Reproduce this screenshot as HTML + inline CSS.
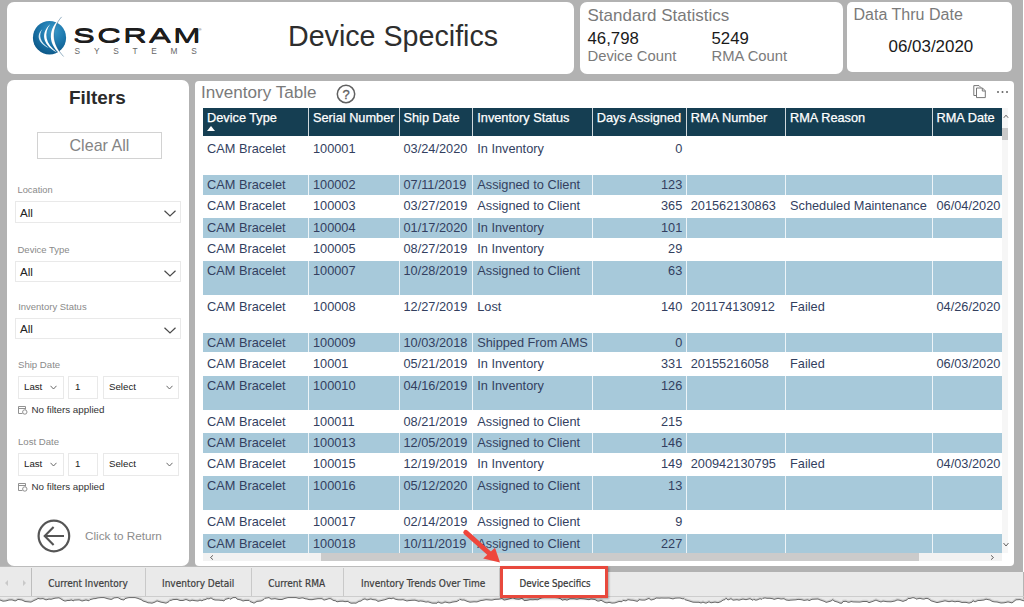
<!DOCTYPE html>
<html><head><meta charset="utf-8"><title>Device Specifics</title>
<style>
html,body{margin:0;padding:0;}
body{width:1024px;height:607px;overflow:hidden;background:#b2b2b2;font-family:"Liberation Sans",Arial,sans-serif;position:relative;}
.abs{position:absolute;}
.card{position:absolute;background:#fff;border-radius:8px;}
.t{position:absolute;white-space:nowrap;line-height:1;}
.hd{position:absolute;background:#153e52;top:108px;height:28px;}
.hd span{position:absolute;left:4.5px;top:2.5px;color:#fff;font-size:12.75px;white-space:nowrap;line-height:14px;-webkit-text-stroke:0.25px #fff;}
.row{position:absolute;left:202.5px;width:799px;}
.row.b{background:#a7c9da;}
.c{position:absolute;font-size:12.75px;color:#333f5f;white-space:nowrap;line-height:14px;}
.vs{position:absolute;width:1px;background:#fff;opacity:.8;top:108px;height:445px;}
.lbl{position:absolute;font-size:9.3px;color:#8a8a8a;white-space:nowrap;line-height:1;}
.dd{position:absolute;border:1px solid #e9e9e9;background:#fff;box-sizing:border-box;}
.dd .v{position:absolute;left:4px;top:50%;margin-top:1px;transform:translateY(-50%);font-size:11.6px;color:#222;line-height:1;}
.sm .v{font-size:9.7px;left:5px;margin-top:0}
.nf{position:absolute;font-size:9.8px;color:#333;white-space:nowrap;line-height:1;}
.tab{position:absolute;top:568px;height:29px;font-size:10px;color:#3c3c3c;line-height:31px;-webkit-text-stroke:0.2px #3c3c3c;white-space:nowrap;font-family:"DejaVu Sans Condensed","DejaVu Sans","Liberation Sans",sans-serif;}
</style></head><body>

<div class="card" style="left:7px;top:2px;width:567px;height:72px;border-radius:7px"></div>
<div class="card" style="left:579.5px;top:2px;width:263px;height:72px;border-radius:7px"></div>
<div class="card" style="left:847px;top:2px;width:165.3px;height:70px;border-radius:5px"></div>
<div class="card" style="left:7px;top:80px;width:182px;height:485.7px;border-radius:7px"></div>
<div class="card" style="left:195px;top:80.6px;width:819px;height:485.1px;border-radius:4px"></div>
<svg class="abs" style="left:30px;top:14px" width="50" height="46" viewBox="0 0 50 46">
<defs><radialGradient id="g" cx="0.6" cy="0.3" r="0.75"><stop offset="0" stop-color="#3c9bcb"/><stop offset="0.5" stop-color="#1d78ad"/><stop offset="1" stop-color="#0b5585"/></radialGradient></defs>
<ellipse cx="19.5" cy="23.7" rx="16.6" ry="16.8" fill="url(#g)"/>
<path d="M12.3 15.3 C7 20 6.4 28 18.8 34.1 C9.6 27.5 8.5 21 12.3 15.3 Z" fill="#dcecf6"/>
<path d="M20.2 10.3 C11.5 18 10.8 30 27.2 38.6 C15 29.5 13.7 19 20.2 10.3 Z" fill="#fff"/>
<path d="M31.6 2.9 C17.5 14 16.5 31 33.6 42.5 C21.8 30 20.8 15 31.6 2.9 Z" fill="#fff"/>
<path d="M31.6 2.9 C20.8 15 21.8 30 33.6 42.5" fill="none" stroke="#0c4b78" stroke-width="0.55" opacity=".8"/>
</svg>
<div class="t" id="scram" style="left:72.6px;top:26.2px;font-size:19.6px;font-weight:400;color:#1d1d1d;letter-spacing:1.4px;transform-origin:0 0;transform:scaleX(1.67);text-shadow:0 0.5px 0 #1d1d1d,0 1px 0 #1d1d1d;-webkit-text-stroke:0.08px #1d1d1d;">SCRAM</div>
<div class="t" style="left:198.5px;top:27.5px;font-size:4px;color:#444;">®</div>
<div class="t" id="systems" style="left:74.6px;top:47.4px;font-size:8.3px;color:#666;letter-spacing:13.75px;">SYSTEMS</div>
<div class="t" style="left:288px;top:22px;font-size:28.65px;color:#2e2e2e;">Device Specifics</div>
<div class="t" style="left:587.5px;top:6.5px;font-size:17px;color:#7a7a7a;">Standard Statistics</div>
<div class="t" style="left:587.5px;top:30.5px;font-size:16.8px;color:#1a1a1a;">46,798</div>
<div class="t" style="left:587.5px;top:49px;font-size:14.8px;color:#7a7a7a;">Device Count</div>
<div class="t" style="left:711.5px;top:30.5px;font-size:16.8px;color:#1a1a1a;">5249</div>
<div class="t" style="left:711.5px;top:49px;font-size:14.8px;color:#7a7a7a;">RMA Count</div>
<div class="t" style="left:853.5px;top:5.5px;font-size:16.05px;color:#7a7a7a;">Data Thru Date</div>
<div class="t" style="left:888.5px;top:39.3px;font-size:16.95px;color:#1a1a1a;">06/03/2020</div>
<div class="t" style="left:69px;top:88.5px;font-size:18.9px;font-weight:bold;color:#2a2a2a;">Filters</div>
<div class="abs" style="left:37px;top:132px;width:125px;height:26.5px;box-sizing:border-box;border:1.5px solid #d2d2d2;"></div>
<div class="t" style="left:69.5px;top:136.5px;font-size:16.1px;color:#848484;">Clear All</div>
<div class="lbl" style="left:17.5px;top:185.5px;font-size:9.3px">Location</div>
<div class="dd" style="left:15px;top:201.0px;width:165.5px;height:21.5px"><span class="v">All</span><svg class="abs" style="right:3.5px;top:50%;margin-top:-1.6px" width="12" height="7" viewBox="0 0 12 7"><path d="M0.5 0.8 L6 6 L11.5 0.8" fill="none" stroke="#4a4a4a" stroke-width="1.2"/></svg></div>
<div class="lbl" style="left:17.5px;top:245.3px;font-size:9.5px">Device Type</div>
<div class="dd" style="left:15px;top:260.5px;width:165.5px;height:21.5px"><span class="v">All</span><svg class="abs" style="right:3.5px;top:50%;margin-top:-1.6px" width="12" height="7" viewBox="0 0 12 7"><path d="M0.5 0.8 L6 6 L11.5 0.8" fill="none" stroke="#4a4a4a" stroke-width="1.2"/></svg></div>
<div class="lbl" style="left:18.2px;top:302.3px;font-size:9.47px">Inventory Status</div>
<div class="dd" style="left:15px;top:317.5px;width:165.5px;height:21.5px"><span class="v">All</span><svg class="abs" style="right:3.5px;top:50%;margin-top:-1.6px" width="12" height="7" viewBox="0 0 12 7"><path d="M0.5 0.8 L6 6 L11.5 0.8" fill="none" stroke="#4a4a4a" stroke-width="1.2"/></svg></div>
<div class="lbl" style="left:18px;top:360px;font-size:9.6px">Ship Date</div>
<div class="dd sm" style="left:18px;top:376px;width:45.5px;height:22.5px"><span class="v">Last</span><svg class="abs" style="right:5.5px;top:50%;margin-top:-2px" width="7" height="5" viewBox="0 0 7 5"><path d="M0.5 0.8 L3.5 4 L6.5 0.8" fill="none" stroke="#606060" stroke-width="0.95"/></svg></div>
<div class="dd sm" style="left:68px;top:376px;width:29.5px;height:22.5px"><span class="v" style="left:6px">1</span></div>
<div class="dd sm" style="left:103px;top:376px;width:76px;height:22.5px"><span class="v">Select</span><svg class="abs" style="right:5.5px;top:50%;margin-top:-2px" width="7" height="5" viewBox="0 0 7 5"><path d="M0.5 0.8 L3.5 4 L6.5 0.8" fill="none" stroke="#606060" stroke-width="0.95"/></svg></div>
<svg class="abs" style="left:18px;top:405.3px" width="10" height="10" viewBox="0 0 10 10"><path d="M0.5 1.5 H7.5 V4.5 M0.5 1.5 V8.5 H4.5 M0.5 3.5 H7.5" fill="none" stroke="#8c8c8c" stroke-width="0.95"/><circle cx="6.8" cy="7" r="2.2" fill="#fff" stroke="#8c8c8c" stroke-width="0.95"/></svg>
<div class="nf" style="left:31.5px;top:405.3px">No filters applied</div>
<div class="lbl" style="left:18px;top:437px;font-size:9.6px">Lost Date</div>
<div class="dd sm" style="left:18px;top:453px;width:45.5px;height:22.5px"><span class="v">Last</span><svg class="abs" style="right:5.5px;top:50%;margin-top:-2px" width="7" height="5" viewBox="0 0 7 5"><path d="M0.5 0.8 L3.5 4 L6.5 0.8" fill="none" stroke="#606060" stroke-width="0.95"/></svg></div>
<div class="dd sm" style="left:68px;top:453px;width:29.5px;height:22.5px"><span class="v" style="left:6px">1</span></div>
<div class="dd sm" style="left:103px;top:453px;width:76px;height:22.5px"><span class="v">Select</span><svg class="abs" style="right:5.5px;top:50%;margin-top:-2px" width="7" height="5" viewBox="0 0 7 5"><path d="M0.5 0.8 L3.5 4 L6.5 0.8" fill="none" stroke="#606060" stroke-width="0.95"/></svg></div>
<svg class="abs" style="left:18px;top:482.3px" width="10" height="10" viewBox="0 0 10 10"><path d="M0.5 1.5 H7.5 V4.5 M0.5 1.5 V8.5 H4.5 M0.5 3.5 H7.5" fill="none" stroke="#8c8c8c" stroke-width="0.95"/><circle cx="6.8" cy="7" r="2.2" fill="#fff" stroke="#8c8c8c" stroke-width="0.95"/></svg>
<div class="nf" style="left:31.5px;top:482.3px">No filters applied</div>
<svg class="abs" style="left:36px;top:518.3px" width="36" height="36" viewBox="0 0 36 36"><circle cx="17.9" cy="18" r="15.3" fill="none" stroke="#555" stroke-width="2.2"/><path d="M28 18 H9 M17.6 9.1 L8.7 18 L17.6 26.9" fill="none" stroke="#555" stroke-width="2.1"/></svg>
<div class="t" style="left:85px;top:530.3px;font-size:11.72px;color:#8c8c8c;">Click to Return</div>
<div class="t" style="left:201px;top:83.5px;font-size:17.1px;color:#7a7a7a;">Inventory Table</div>
<svg class="abs" style="left:336px;top:84px" width="20" height="20" viewBox="0 0 20 20"><circle cx="10" cy="10" r="8.7" fill="none" stroke="#606060" stroke-width="1.5"/><text x="10" y="14.6" font-size="13" text-anchor="middle" fill="#606060" stroke="#606060" stroke-width="0.3" font-family="Liberation Sans, sans-serif">?</text></svg>
<svg class="abs" style="left:973px;top:85px" width="14" height="14" viewBox="0 0 14 14"><path d="M3.5 10.5 H0.8 V0.6 H6 L8 2.6" fill="none" stroke="#777" stroke-width="1"/><path d="M3.5 3 H9.5 L12.3 5.8 V12.6 H3.5 Z M9.3 3 V6 H12.3" fill="#fff" stroke="#777" stroke-width="1"/></svg>
<div class="abs" style="left:997px;top:91px;width:2px;height:2px;background:#666;border-radius:1px;box-shadow:4.5px 0 0 #666,9px 0 0 #666"></div>
<div class="hd" style="left:202.5px;width:106.0px"><span>Device Type</span></div>
<div class="hd" style="left:308.5px;width:90.5px"><span>Serial Number</span></div>
<div class="hd" style="left:399px;width:73.75px"><span>Ship Date</span></div>
<div class="hd" style="left:472.75px;width:119.5px"><span>Inventory Status</span></div>
<div class="hd" style="left:592.25px;width:94.0px"><span>Days Assigned</span></div>
<div class="hd" style="left:686.25px;width:99.25px"><span>RMA Number</span></div>
<div class="hd" style="left:785.5px;width:146.5px"><span>RMA Reason</span></div>
<div class="hd" style="left:932px;width:69.5px"><span>RMA Date</span></div>
<div class="abs" style="left:207px;top:126px;width:0;height:0;border-left:4.4px solid transparent;border-right:4.4px solid transparent;border-bottom:5px solid #fff"></div>
<div class="row" style="top:137px;height:37px"></div>
<div class="c" style="left:207.0px;top:142.1px">CAM Bracelet</div>
<div class="c" style="left:313.0px;top:142.1px">100001</div>
<div class="c" style="left:403.5px;top:142.1px">03/24/2020</div>
<div class="c" style="left:477.25px;top:142.1px">In Inventory</div>
<div class="c" style="right:341.75px;top:142.1px">0</div>
<div class="row b" style="top:174.6px;height:20.0px"></div>
<div class="c" style="left:207.0px;top:178.29999999999998px">CAM Bracelet</div>
<div class="c" style="left:313.0px;top:178.29999999999998px">100002</div>
<div class="c" style="left:403.5px;top:178.29999999999998px">07/11/2019</div>
<div class="c" style="left:477.25px;top:178.29999999999998px">Assigned to Client</div>
<div class="c" style="right:341.75px;top:178.29999999999998px">123</div>
<div class="row" style="top:195px;height:22px"></div>
<div class="c" style="left:207.0px;top:199.1px">CAM Bracelet</div>
<div class="c" style="left:313.0px;top:199.1px">100003</div>
<div class="c" style="left:403.5px;top:199.1px">03/27/2019</div>
<div class="c" style="left:477.25px;top:199.1px">Assigned to Client</div>
<div class="c" style="right:341.75px;top:199.1px">365</div>
<div class="c" style="left:690.75px;top:199.1px">201562130863</div>
<div class="c" style="left:790.0px;top:199.1px">Scheduled Maintenance</div>
<div class="c" style="left:936.5px;top:199.1px">06/04/2020</div>
<div class="row b" style="top:218px;height:20px"></div>
<div class="c" style="left:207.0px;top:221.29999999999998px">CAM Bracelet</div>
<div class="c" style="left:313.0px;top:221.29999999999998px">100004</div>
<div class="c" style="left:403.5px;top:221.29999999999998px">01/17/2020</div>
<div class="c" style="left:477.25px;top:221.29999999999998px">In Inventory</div>
<div class="c" style="right:341.75px;top:221.29999999999998px">101</div>
<div class="row" style="top:238px;height:22px"></div>
<div class="c" style="left:207.0px;top:242.1px">CAM Bracelet</div>
<div class="c" style="left:313.0px;top:242.1px">100005</div>
<div class="c" style="left:403.5px;top:242.1px">08/27/2019</div>
<div class="c" style="left:477.25px;top:242.1px">In Inventory</div>
<div class="c" style="right:341.75px;top:242.1px">29</div>
<div class="row b" style="top:261.3px;height:33.39999999999998px"></div>
<div class="c" style="left:207.0px;top:264.3px">CAM Bracelet</div>
<div class="c" style="left:313.0px;top:264.3px">100007</div>
<div class="c" style="left:403.5px;top:264.3px">10/28/2019</div>
<div class="c" style="left:477.25px;top:264.3px">Assigned to Client</div>
<div class="c" style="right:341.75px;top:264.3px">63</div>
<div class="row" style="top:295px;height:37px"></div>
<div class="c" style="left:207.0px;top:300.1px">CAM Bracelet</div>
<div class="c" style="left:313.0px;top:300.1px">100008</div>
<div class="c" style="left:403.5px;top:300.1px">12/27/2019</div>
<div class="c" style="left:477.25px;top:300.1px">Lost</div>
<div class="c" style="right:341.75px;top:300.1px">140</div>
<div class="c" style="left:690.75px;top:300.1px">201174130912</div>
<div class="c" style="left:790.0px;top:300.1px">Failed</div>
<div class="c" style="left:936.5px;top:300.1px">04/26/2020</div>
<div class="row b" style="top:332.7px;height:19.69999999999999px"></div>
<div class="c" style="left:207.0px;top:336.3px">CAM Bracelet</div>
<div class="c" style="left:313.0px;top:336.3px">100009</div>
<div class="c" style="left:403.5px;top:336.3px">10/03/2018</div>
<div class="c" style="left:477.25px;top:336.3px">Shipped From AMS</div>
<div class="c" style="right:341.75px;top:336.3px">0</div>
<div class="row" style="top:353px;height:22px"></div>
<div class="c" style="left:207.0px;top:357.1px">CAM Bracelet</div>
<div class="c" style="left:313.0px;top:357.1px">10001</div>
<div class="c" style="left:403.5px;top:357.1px">05/21/2019</div>
<div class="c" style="left:477.25px;top:357.1px">In Inventory</div>
<div class="c" style="right:341.75px;top:357.1px">331</div>
<div class="c" style="left:690.75px;top:357.1px">20155216058</div>
<div class="c" style="left:790.0px;top:357.1px">Failed</div>
<div class="c" style="left:936.5px;top:357.1px">06/03/2020</div>
<div class="row b" style="top:376.2px;height:33.80000000000001px"></div>
<div class="c" style="left:207.0px;top:379.3px">CAM Bracelet</div>
<div class="c" style="left:313.0px;top:379.3px">100010</div>
<div class="c" style="left:403.5px;top:379.3px">04/16/2019</div>
<div class="c" style="left:477.25px;top:379.3px">In Inventory</div>
<div class="c" style="right:341.75px;top:379.3px">126</div>
<div class="row" style="top:410px;height:22px"></div>
<div class="c" style="left:207.0px;top:415.1px">CAM Bracelet</div>
<div class="c" style="left:313.0px;top:415.1px">100011</div>
<div class="c" style="left:403.5px;top:415.1px">08/21/2019</div>
<div class="c" style="left:477.25px;top:415.1px">Assigned to Client</div>
<div class="c" style="right:341.75px;top:415.1px">215</div>
<div class="row b" style="top:433px;height:19.80000000000001px"></div>
<div class="c" style="left:207.0px;top:436.3px">CAM Bracelet</div>
<div class="c" style="left:313.0px;top:436.3px">100013</div>
<div class="c" style="left:403.5px;top:436.3px">12/05/2019</div>
<div class="c" style="left:477.25px;top:436.3px">Assigned to Client</div>
<div class="c" style="right:341.75px;top:436.3px">146</div>
<div class="row" style="top:453px;height:22px"></div>
<div class="c" style="left:207.0px;top:457.1px">CAM Bracelet</div>
<div class="c" style="left:313.0px;top:457.1px">100015</div>
<div class="c" style="left:403.5px;top:457.1px">12/19/2019</div>
<div class="c" style="left:477.25px;top:457.1px">In Inventory</div>
<div class="c" style="right:341.75px;top:457.1px">149</div>
<div class="c" style="left:690.75px;top:457.1px">200942130795</div>
<div class="c" style="left:790.0px;top:457.1px">Failed</div>
<div class="c" style="left:936.5px;top:457.1px">04/03/2020</div>
<div class="row b" style="top:476.2px;height:33.80000000000001px"></div>
<div class="c" style="left:207.0px;top:479.3px">CAM Bracelet</div>
<div class="c" style="left:313.0px;top:479.3px">100016</div>
<div class="c" style="left:403.5px;top:479.3px">05/12/2020</div>
<div class="c" style="left:477.25px;top:479.3px">Assigned to Client</div>
<div class="c" style="right:341.75px;top:479.3px">13</div>
<div class="row" style="top:510px;height:22px"></div>
<div class="c" style="left:207.0px;top:515.1px">CAM Bracelet</div>
<div class="c" style="left:313.0px;top:515.1px">100017</div>
<div class="c" style="left:403.5px;top:515.1px">02/14/2019</div>
<div class="c" style="left:477.25px;top:515.1px">Assigned to Client</div>
<div class="c" style="right:341.75px;top:515.1px">9</div>
<div class="row b" style="top:533.6px;height:19.600000000000023px"></div>
<div class="c" style="left:207.0px;top:537.3000000000001px">CAM Bracelet</div>
<div class="c" style="left:313.0px;top:537.3000000000001px">100018</div>
<div class="c" style="left:403.5px;top:537.3000000000001px">10/11/2019</div>
<div class="c" style="left:477.25px;top:537.3000000000001px">Assigned to Client</div>
<div class="c" style="right:341.75px;top:537.3000000000001px">227</div>
<div class="vs" style="left:308px"></div>
<div class="vs" style="left:399px"></div>
<div class="vs" style="left:472px"></div>
<div class="vs" style="left:592px"></div>
<div class="vs" style="left:686px"></div>
<div class="vs" style="left:785px"></div>
<div class="vs" style="left:932px"></div>
<div class="abs" style="left:1002px;top:108px;width:6px;height:445px;background:#f6f6f6"></div>
<div class="abs" style="left:1002px;top:128px;width:6px;height:12px;background:#c9c9c9"></div>
<div class="abs" style="left:202.5px;top:553.2px;width:799px;height:7.6px;background:#f2f2f2"></div>
<div class="abs" style="left:321.3px;top:553.2px;width:598px;height:7.6px;background:#cbcbcb"></div>
<svg class="abs" style="left:1002.7px;top:113.5px" width="6" height="5" viewBox="0 0 6 5"><path d="M0.8 3.8 L3 1.2 L5.2 3.8" fill="none" stroke="#555" stroke-width="0.9"/></svg>
<svg class="abs" style="left:1002.5px;top:541.5px" width="6" height="5" viewBox="0 0 6 5"><path d="M0.5 1 L3 4 L5.5 1" fill="none" stroke="#555" stroke-width="0.9"/></svg>
<svg class="abs" style="left:208.5px;top:554.5px" width="6" height="5" viewBox="0 0 6 5"><path d="M4 0.3 L1.5 2.5 L4 4.7" fill="none" stroke="#555" stroke-width="0.9"/></svg>
<svg class="abs" style="left:988.5px;top:554.5px" width="6" height="5" viewBox="0 0 6 5"><path d="M2 0.3 L4.5 2.5 L2 4.7" fill="none" stroke="#555" stroke-width="0.9"/></svg>
<div class="abs" style="left:0;top:566.3px;width:1024px;height:41px;background:#eaeaea"></div>
<div class="abs" style="left:0;top:566.3px;width:1024px;height:1px;background:#bcbcbc"></div>
<div class="abs" style="left:608px;top:566.3px;width:416px;height:6px;background:#b2b2b2"></div>
<div class="abs" style="left:31px;top:567.5px;width:1px;height:29px;background:#bdbdbd"></div>
<div class="abs" style="left:144.5px;top:567.5px;width:1px;height:29px;background:#c9c9c9"></div>
<div class="tab" style="left:48.2px">Current Inventory</div>
<div class="abs" style="left:250.5px;top:567.5px;width:1px;height:29px;background:#c9c9c9"></div>
<div class="tab" style="left:162px">Inventory Detail</div>
<div class="abs" style="left:342.5px;top:567.5px;width:1px;height:29px;background:#c9c9c9"></div>
<div class="tab" style="left:268.3px">Current RMA</div>
<div class="abs" style="left:499px;top:567.5px;width:1px;height:29px;background:#c9c9c9"></div>
<div class="tab" style="left:361px">Inventory Trends Over Time</div>
<svg class="abs" style="left:3.5px;top:578.5px" width="24" height="8" viewBox="0 0 24 8"><path d="M4 1 L1 4 L4 7 Z M19 1 L22 4 L19 7 Z" fill="#c9c9c9"/></svg>
<svg class="abs" style="left:455px;top:525px" width="50" height="50" viewBox="0 0 50 50"><path d="M10.8 7.4 L35 29" stroke="#ee463c" stroke-width="5" stroke-linecap="round" fill="none"/><path d="M45 37.6 L28.2 33.6 L40 22.7 Z" fill="#ee463c"/></svg>
<div class="abs" style="left:1022.5px;top:0;width:1.5px;height:572.3px;background:#fff"></div>
<div class="abs" style="left:1022.5px;top:572.3px;width:1.5px;height:30px;background:#b4b4b4"></div>
<div class="abs" style="left:0;top:596px;width:1024px;height:1px;background:#cdcdcd"></div>
<svg class="abs" style="left:0;top:0" width="1024" height="607" viewBox="0 0 1024 607"><path d="M0 599.0 L3 600.2 L6 599.9 L9 599.0 L12 598.9 L15 599.9 L16 599.7 L18 598.4 L22 599.0 L25 600.5 L28 600.8 L31 601.1 L34 599.5 L37 598.2 L38 597.4 L40 597.9 L43 597.6 L46 598.9 L49 598.1 L51 598.3 L55 597.2 L59 596.8 L62 598.6 L63 599.3 L65 600.1 L68 599.4 L69 599.6 L70 599.3 L72 599.0 L73 600.1 L74 599.2 L75 599.1 L79 598.9 L80 599.1 L82 600.0 L84 599.5 L86 599.0 L89 599.8 L90 598.7 L94 597.6 L95 597.7 L98 596.9 L101 596.6 L104 596.6 L108 597.8 L111 598.4 L112 598.2 L114 596.9 L117 596.6 L118 596.6 L121 598.4 L124 599.0 L125 597.7 L127 597.0 L129 596.6 L132 596.6 L134 596.6 L135 596.6 L138 597.4 L139 597.9 L141 598.5 L143 600.0 L146 600.9 L148 601.8 L150 601.9 L152 602.2 L155 601.1 L157 599.9 L161 601.2 L163 601.5 L166 602.2 L169 600.6 L170 599.3 L171 599.4 L173 598.6 L177 598.4 L180 599.5 L183 599.5 L186 598.5 L190 600.0 L192 599.2 L195 599.7 L198 600.0 L200 599.1 L202 599.9 L203 599.1 L206 598.4 L207 597.6 L209 597.9 L211 596.9 L213 598.4 L215 599.0 L219 599.1 L221 599.4 L222 599.3 L224 600.0 L225 598.5 L229 597.3 L230 598.3 L232 597.3 L233 596.6 L236 596.6 L237 598.1 L241 599.0 L243 600.0 L245 599.5 L249 599.4 L250 600.5 L253 601.7 L254 602.2 L257 600.4 L261 600.0 L264 598.4 L265 597.3 L269 596.6 L271 598.1 L275 597.7 L279 598.5 L282 598.5 L285 597.4 L288 596.6 L291 596.6 L292 596.6 L296 596.6 L299 597.4 L302 596.9 L303 596.9 L305 597.7 L307 598.0 L309 598.6 L312 598.7 L314 598.3 L318 597.7 L322 597.7 L324 599.1 L327 598.3 L329 597.6 L331 597.8 L332 598.6 L334 599.7 L335 599.5 L337 600.8 L340 600.3 L343 600.2 L345 600.7 L348 600.4 L349 601.3 L351 602.2 L352 602.2 L354 602.1 L356 602.2 L359 600.4 L361 600.0 L363 598.5 L365 597.9 L367 599.0 L371 597.9 L372 598.5 L376 599.0 L378 600.4 L382 599.4 L385 598.7 L389 597.3 L392 597.7 L393 596.9 L395 598.1 L398 598.8 L401 598.9 L403 598.7 L407 600.0 L408 599.7 L412 599.3 L415 599.2 L419 600.4 L420 599.9 L423 600.3 L426 601.1 L428 600.8 L432 602.1 L433 602.2 L437 602.2 L438 601.0 L441 602.2 L443 602.0 L445 601.0 L449 601.9 L451 601.6 L452 601.2 L455 600.7 L457 600.5 L458 599.6 L459 599.4 L460 598.4 L462 599.1 L464 599.0 L467 600.3 L470 601.2 L474 600.8 L477 600.9 L481 599.5 L483 599.3 L486 598.7 L490 599.0 L492 599.1 L495 598.4 L499 598.2 L502 597.5 L504 599.1 L507 598.5 L510 597.7 L513 596.8 L514 597.4 L515 597.8 L516 598.0 L519 598.3 L522 597.3 L523 598.2 L524 599.6 L527 599.4 L530 598.7 L533 598.8 L535 598.6 L538 598.8 L539 598.0 L542 596.8 L544 596.6 L545 596.6 L547 596.6 L551 596.6 L555 596.6 L558 596.9 L561 597.9 L562 599.2 L565 598.5 L567 599.2 L570 597.8 L574 597.8 L577 598.3 L580 597.6 L584 597.9 L586 598.2 L589 598.7 L591 598.0 L595 598.5 L597 599.9 L599 600.1 L601 599.2 L603 600.4 L605 601.5 L607 601.9 L609 601.3 L612 602.1 L615 601.9 L619 600.5 L622 600.7 L623 599.4 L626 599.9 L628 598.7 L631 599.2 L633 599.3 L637 600.3 L638 600.1 L639 598.7 L642 599.1 L645 599.1 L647 598.2 L649 597.4 L651 599.1 L655 597.9 L656 597.0 L660 597.2 L661 597.0 L664 597.1 L666 597.1 L669 597.0 L673 597.9 L675 597.2 L678 597.0 L680 597.0 L682 597.6 L683 597.9 L684 597.6 L685 598.7 L689 599.9 L693 601.2 L696 601.3 L699 601.3 L701 602.0 L703 601.1 L704 601.6 L706 602.2 L709 600.8 L711 601.8 L715 601.1 L718 601.7 L721 600.6 L723 599.1 L725 598.6 L726 597.2 L728 599.0 L731 597.7 L733 599.2 L737 598.7 L739 599.2 L742 598.3 L743 598.1 L746 598.7 L750 597.7 L753 599.3 L754 598.2 L755 599.1 L757 599.0 L760 597.7 L762 598.3 L763 597.3 L765 596.9 L767 597.3 L770 597.3 L773 597.8 L774 598.4 L778 597.3 L781 598.0 L782 597.9 L784 597.7 L786 599.0 L789 599.4 L790 599.2 L793 599.0 L796 598.8 L798 598.4 L800 598.5 L802 598.8 L804 599.4 L808 598.8 L809 599.7 L812 598.3 L814 598.2 L818 598.0 L820 598.9 L821 599.2 L825 600.6 L826 601.4 L828 600.9 L831 600.0 L833 598.6 L834 600.0 L838 601.2 L840 602.2 L842 602.2 L843 600.5 L846 600.3 L848 601.3 L850 601.1 L851 600.5 L853 600.9 L856 601.0 L860 601.1 L863 600.5 L867 600.5 L869 601.7 L873 600.3 L876 599.1 L878 600.0 L881 601.0 L883 600.1 L887 600.7 L891 600.8 L895 600.0 L897 599.0 L899 599.1 L903 600.4 L907 598.9 L908 597.5 L910 597.5 L913 596.6 L915 597.1 L916 598.1 L920 597.3 L922 597.9 L924 598.1 L926 597.4 L928 597.6 L930 598.9 L931 599.8 L934 600.7 L937 601.6 L939 601.2 L943 600.3 L945 599.8 L949 600.7 L952 600.1 L955 600.8 L957 600.4 L959 600.5 L962 601.5 L963 601.4 L966 601.4 L969 602.1 L972 601.2 L973 599.7 L975 600.9 L978 599.5 L980 599.5 L984 599.0 L986 598.2 L990 599.0 L992 600.3 L994 600.8 L997 601.0 L1001 602.0 L1004 601.8 L1006 601.4 L1008 600.9 L1012 601.9 L1014 600.4 L1016 598.8 L1020 598.6 L1023 599.6 L1024 599.8" fill="none" stroke="#cfcfcf" stroke-width="1.4"/><path d="M0 607 L0 600.0 L3 601.2 L6 600.9 L9 600.0 L12 599.9 L15 600.9 L16 600.7 L18 599.4 L22 600.0 L25 601.5 L28 601.8 L31 602.1 L34 600.5 L37 599.2 L38 598.4 L40 598.9 L43 598.6 L46 599.9 L49 599.1 L51 599.3 L55 598.2 L59 597.8 L62 599.6 L63 600.3 L65 601.1 L68 600.4 L69 600.6 L70 600.3 L72 600.0 L73 601.1 L74 600.2 L75 600.1 L79 599.9 L80 600.1 L82 601.0 L84 600.5 L86 600.0 L89 600.8 L90 599.7 L94 598.6 L95 598.7 L98 597.9 L101 597.6 L104 597.6 L108 598.8 L111 599.4 L112 599.2 L114 597.9 L117 597.6 L118 597.6 L121 599.4 L124 600.0 L125 598.7 L127 598.0 L129 597.6 L132 597.6 L134 597.6 L135 597.6 L138 598.4 L139 598.9 L141 599.5 L143 601.0 L146 601.9 L148 602.8 L150 602.9 L152 603.2 L155 602.1 L157 600.9 L161 602.2 L163 602.5 L166 603.2 L169 601.6 L170 600.3 L171 600.4 L173 599.6 L177 599.4 L180 600.5 L183 600.5 L186 599.5 L190 601.0 L192 600.2 L195 600.7 L198 601.0 L200 600.1 L202 600.9 L203 600.1 L206 599.4 L207 598.6 L209 598.9 L211 597.9 L213 599.4 L215 600.0 L219 600.1 L221 600.4 L222 600.3 L224 601.0 L225 599.5 L229 598.3 L230 599.3 L232 598.3 L233 597.6 L236 597.6 L237 599.1 L241 600.0 L243 601.0 L245 600.5 L249 600.4 L250 601.5 L253 602.7 L254 603.2 L257 601.4 L261 601.0 L264 599.4 L265 598.3 L269 597.6 L271 599.1 L275 598.7 L279 599.5 L282 599.5 L285 598.4 L288 597.6 L291 597.6 L292 597.6 L296 597.6 L299 598.4 L302 597.9 L303 597.9 L305 598.7 L307 599.0 L309 599.6 L312 599.7 L314 599.3 L318 598.7 L322 598.7 L324 600.1 L327 599.3 L329 598.6 L331 598.8 L332 599.6 L334 600.7 L335 600.5 L337 601.8 L340 601.3 L343 601.2 L345 601.7 L348 601.4 L349 602.3 L351 603.2 L352 603.2 L354 603.1 L356 603.2 L359 601.4 L361 601.0 L363 599.5 L365 598.9 L367 600.0 L371 598.9 L372 599.5 L376 600.0 L378 601.4 L382 600.4 L385 599.7 L389 598.3 L392 598.7 L393 597.9 L395 599.1 L398 599.8 L401 599.9 L403 599.7 L407 601.0 L408 600.7 L412 600.3 L415 600.2 L419 601.4 L420 600.9 L423 601.3 L426 602.1 L428 601.8 L432 603.1 L433 603.2 L437 603.2 L438 602.0 L441 603.2 L443 603.0 L445 602.0 L449 602.9 L451 602.6 L452 602.2 L455 601.7 L457 601.5 L458 600.6 L459 600.4 L460 599.4 L462 600.1 L464 600.0 L467 601.3 L470 602.2 L474 601.8 L477 601.9 L481 600.5 L483 600.3 L486 599.7 L490 600.0 L492 600.1 L495 599.4 L499 599.2 L502 598.5 L504 600.1 L507 599.5 L510 598.7 L513 597.8 L514 598.4 L515 598.8 L516 599.0 L519 599.3 L522 598.3 L523 599.2 L524 600.6 L527 600.4 L530 599.7 L533 599.8 L535 599.6 L538 599.8 L539 599.0 L542 597.8 L544 597.6 L545 597.6 L547 597.6 L551 597.6 L555 597.6 L558 597.9 L561 598.9 L562 600.2 L565 599.5 L567 600.2 L570 598.8 L574 598.8 L577 599.3 L580 598.6 L584 598.9 L586 599.2 L589 599.7 L591 599.0 L595 599.5 L597 600.9 L599 601.1 L601 600.2 L603 601.4 L605 602.5 L607 602.9 L609 602.3 L612 603.1 L615 602.9 L619 601.5 L622 601.7 L623 600.4 L626 600.9 L628 599.7 L631 600.2 L633 600.3 L637 601.3 L638 601.1 L639 599.7 L642 600.1 L645 600.1 L647 599.2 L649 598.4 L651 600.1 L655 598.9 L656 598.0 L660 598.2 L661 598.0 L664 598.1 L666 598.1 L669 598.0 L673 598.9 L675 598.2 L678 598.0 L680 598.0 L682 598.6 L683 598.9 L684 598.6 L685 599.7 L689 600.9 L693 602.2 L696 602.3 L699 602.3 L701 603.0 L703 602.1 L704 602.6 L706 603.2 L709 601.8 L711 602.8 L715 602.1 L718 602.7 L721 601.6 L723 600.1 L725 599.6 L726 598.2 L728 600.0 L731 598.7 L733 600.2 L737 599.7 L739 600.2 L742 599.3 L743 599.1 L746 599.7 L750 598.7 L753 600.3 L754 599.2 L755 600.1 L757 600.0 L760 598.7 L762 599.3 L763 598.3 L765 597.9 L767 598.3 L770 598.3 L773 598.8 L774 599.4 L778 598.3 L781 599.0 L782 598.9 L784 598.7 L786 600.0 L789 600.4 L790 600.2 L793 600.0 L796 599.8 L798 599.4 L800 599.5 L802 599.8 L804 600.4 L808 599.8 L809 600.7 L812 599.3 L814 599.2 L818 599.0 L820 599.9 L821 600.2 L825 601.6 L826 602.4 L828 601.9 L831 601.0 L833 599.6 L834 601.0 L838 602.2 L840 603.2 L842 603.2 L843 601.5 L846 601.3 L848 602.3 L850 602.1 L851 601.5 L853 601.9 L856 602.0 L860 602.1 L863 601.5 L867 601.5 L869 602.7 L873 601.3 L876 600.1 L878 601.0 L881 602.0 L883 601.1 L887 601.7 L891 601.8 L895 601.0 L897 600.0 L899 600.1 L903 601.4 L907 599.9 L908 598.5 L910 598.5 L913 597.6 L915 598.1 L916 599.1 L920 598.3 L922 598.9 L924 599.1 L926 598.4 L928 598.6 L930 599.9 L931 600.8 L934 601.7 L937 602.6 L939 602.2 L943 601.3 L945 600.8 L949 601.7 L952 601.1 L955 601.8 L957 601.4 L959 601.5 L962 602.5 L963 602.4 L966 602.4 L969 603.1 L972 602.2 L973 600.7 L975 601.9 L978 600.5 L980 600.5 L984 600.0 L986 599.2 L990 600.0 L992 601.3 L994 601.8 L997 602.0 L1001 603.0 L1004 602.8 L1006 602.4 L1008 601.9 L1012 602.9 L1014 601.4 L1016 599.8 L1020 599.6 L1023 600.6 L1024 600.8 L1024 607 Z" fill="#fff"/><path d="M0 600.0 L3 601.2 L6 600.9 L9 600.0 L12 599.9 L15 600.9 L16 600.7 L18 599.4 L22 600.0 L25 601.5 L28 601.8 L31 602.1 L34 600.5 L37 599.2 L38 598.4 L40 598.9 L43 598.6 L46 599.9 L49 599.1 L51 599.3 L55 598.2 L59 597.8 L62 599.6 L63 600.3 L65 601.1 L68 600.4 L69 600.6 L70 600.3 L72 600.0 L73 601.1 L74 600.2 L75 600.1 L79 599.9 L80 600.1 L82 601.0 L84 600.5 L86 600.0 L89 600.8 L90 599.7 L94 598.6 L95 598.7 L98 597.9 L101 597.6 L104 597.6 L108 598.8 L111 599.4 L112 599.2 L114 597.9 L117 597.6 L118 597.6 L121 599.4 L124 600.0 L125 598.7 L127 598.0 L129 597.6 L132 597.6 L134 597.6 L135 597.6 L138 598.4 L139 598.9 L141 599.5 L143 601.0 L146 601.9 L148 602.8 L150 602.9 L152 603.2 L155 602.1 L157 600.9 L161 602.2 L163 602.5 L166 603.2 L169 601.6 L170 600.3 L171 600.4 L173 599.6 L177 599.4 L180 600.5 L183 600.5 L186 599.5 L190 601.0 L192 600.2 L195 600.7 L198 601.0 L200 600.1 L202 600.9 L203 600.1 L206 599.4 L207 598.6 L209 598.9 L211 597.9 L213 599.4 L215 600.0 L219 600.1 L221 600.4 L222 600.3 L224 601.0 L225 599.5 L229 598.3 L230 599.3 L232 598.3 L233 597.6 L236 597.6 L237 599.1 L241 600.0 L243 601.0 L245 600.5 L249 600.4 L250 601.5 L253 602.7 L254 603.2 L257 601.4 L261 601.0 L264 599.4 L265 598.3 L269 597.6 L271 599.1 L275 598.7 L279 599.5 L282 599.5 L285 598.4 L288 597.6 L291 597.6 L292 597.6 L296 597.6 L299 598.4 L302 597.9 L303 597.9 L305 598.7 L307 599.0 L309 599.6 L312 599.7 L314 599.3 L318 598.7 L322 598.7 L324 600.1 L327 599.3 L329 598.6 L331 598.8 L332 599.6 L334 600.7 L335 600.5 L337 601.8 L340 601.3 L343 601.2 L345 601.7 L348 601.4 L349 602.3 L351 603.2 L352 603.2 L354 603.1 L356 603.2 L359 601.4 L361 601.0 L363 599.5 L365 598.9 L367 600.0 L371 598.9 L372 599.5 L376 600.0 L378 601.4 L382 600.4 L385 599.7 L389 598.3 L392 598.7 L393 597.9 L395 599.1 L398 599.8 L401 599.9 L403 599.7 L407 601.0 L408 600.7 L412 600.3 L415 600.2 L419 601.4 L420 600.9 L423 601.3 L426 602.1 L428 601.8 L432 603.1 L433 603.2 L437 603.2 L438 602.0 L441 603.2 L443 603.0 L445 602.0 L449 602.9 L451 602.6 L452 602.2 L455 601.7 L457 601.5 L458 600.6 L459 600.4 L460 599.4 L462 600.1 L464 600.0 L467 601.3 L470 602.2 L474 601.8 L477 601.9 L481 600.5 L483 600.3 L486 599.7 L490 600.0 L492 600.1 L495 599.4 L499 599.2 L502 598.5 L504 600.1 L507 599.5 L510 598.7 L513 597.8 L514 598.4 L515 598.8 L516 599.0 L519 599.3 L522 598.3 L523 599.2 L524 600.6 L527 600.4 L530 599.7 L533 599.8 L535 599.6 L538 599.8 L539 599.0 L542 597.8 L544 597.6 L545 597.6 L547 597.6 L551 597.6 L555 597.6 L558 597.9 L561 598.9 L562 600.2 L565 599.5 L567 600.2 L570 598.8 L574 598.8 L577 599.3 L580 598.6 L584 598.9 L586 599.2 L589 599.7 L591 599.0 L595 599.5 L597 600.9 L599 601.1 L601 600.2 L603 601.4 L605 602.5 L607 602.9 L609 602.3 L612 603.1 L615 602.9 L619 601.5 L622 601.7 L623 600.4 L626 600.9 L628 599.7 L631 600.2 L633 600.3 L637 601.3 L638 601.1 L639 599.7 L642 600.1 L645 600.1 L647 599.2 L649 598.4 L651 600.1 L655 598.9 L656 598.0 L660 598.2 L661 598.0 L664 598.1 L666 598.1 L669 598.0 L673 598.9 L675 598.2 L678 598.0 L680 598.0 L682 598.6 L683 598.9 L684 598.6 L685 599.7 L689 600.9 L693 602.2 L696 602.3 L699 602.3 L701 603.0 L703 602.1 L704 602.6 L706 603.2 L709 601.8 L711 602.8 L715 602.1 L718 602.7 L721 601.6 L723 600.1 L725 599.6 L726 598.2 L728 600.0 L731 598.7 L733 600.2 L737 599.7 L739 600.2 L742 599.3 L743 599.1 L746 599.7 L750 598.7 L753 600.3 L754 599.2 L755 600.1 L757 600.0 L760 598.7 L762 599.3 L763 598.3 L765 597.9 L767 598.3 L770 598.3 L773 598.8 L774 599.4 L778 598.3 L781 599.0 L782 598.9 L784 598.7 L786 600.0 L789 600.4 L790 600.2 L793 600.0 L796 599.8 L798 599.4 L800 599.5 L802 599.8 L804 600.4 L808 599.8 L809 600.7 L812 599.3 L814 599.2 L818 599.0 L820 599.9 L821 600.2 L825 601.6 L826 602.4 L828 601.9 L831 601.0 L833 599.6 L834 601.0 L838 602.2 L840 603.2 L842 603.2 L843 601.5 L846 601.3 L848 602.3 L850 602.1 L851 601.5 L853 601.9 L856 602.0 L860 602.1 L863 601.5 L867 601.5 L869 602.7 L873 601.3 L876 600.1 L878 601.0 L881 602.0 L883 601.1 L887 601.7 L891 601.8 L895 601.0 L897 600.0 L899 600.1 L903 601.4 L907 599.9 L908 598.5 L910 598.5 L913 597.6 L915 598.1 L916 599.1 L920 598.3 L922 598.9 L924 599.1 L926 598.4 L928 598.6 L930 599.9 L931 600.8 L934 601.7 L937 602.6 L939 602.2 L943 601.3 L945 600.8 L949 601.7 L952 601.1 L955 601.8 L957 601.4 L959 601.5 L962 602.5 L963 602.4 L966 602.4 L969 603.1 L972 602.2 L973 600.7 L975 601.9 L978 600.5 L980 600.5 L984 600.0 L986 599.2 L990 600.0 L992 601.3 L994 601.8 L997 602.0 L1001 603.0 L1004 602.8 L1006 602.4 L1008 601.9 L1012 602.9 L1014 601.4 L1016 599.8 L1020 599.6 L1023 600.6 L1024 600.8" fill="none" stroke="#606060" stroke-width="0.95" stroke-linejoin="round"/></svg>
<div class="tab" style="left:499.6px;top:565.8px;width:108.8px;height:32.4px;background:#fff;text-align:center;border:3px solid #e8493d;box-sizing:border-box;line-height:29px;padding-left:2px;font-size:9.7px;color:#333;box-shadow:1px 1px 2px rgba(0,0,0,.3)">Device Specifics</div>
</body></html>
